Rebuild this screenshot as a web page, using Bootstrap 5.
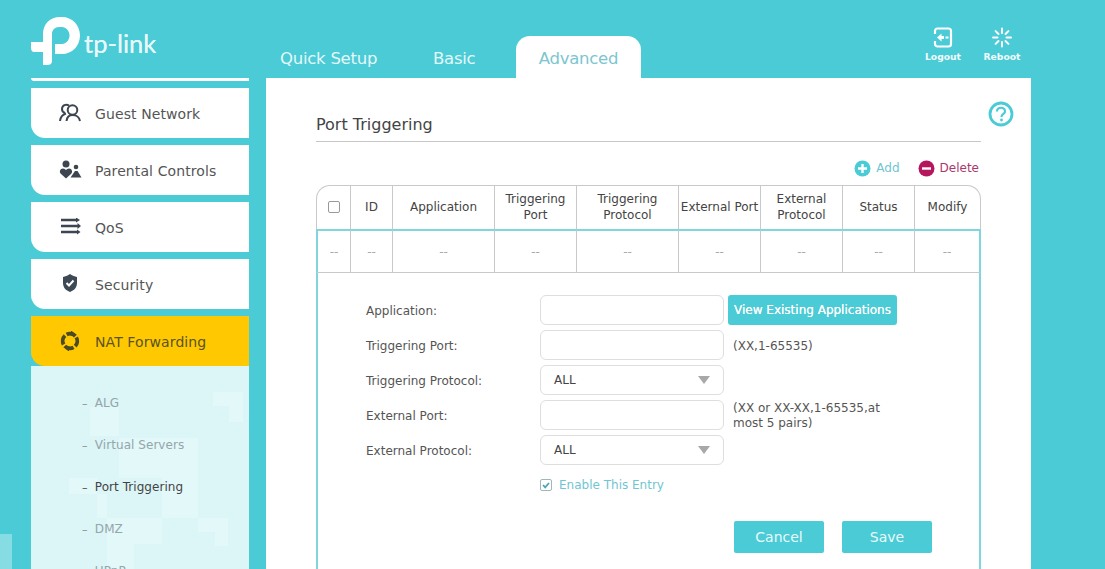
<!DOCTYPE html>
<html lang="en">
<head>
<meta charset="utf-8">
<title>Port Triggering</title>
<link href="https://cdn.jsdelivr.net/npm/bootstrap@5.3.0/dist/css/bootstrap.min.css" rel="stylesheet">
<style>
html,body{height:100%;overflow:hidden}
body{background:#4acbd6;font-family:"DejaVu Sans",Verdana,sans-serif;font-size:12px;color:#555;position:relative}
.shell{height:569px;width:1105px}
.top-bar{height:78px;padding-left:31px}
.logo-box{width:235px;position:relative;height:78px;flex:none}
.logo-mark{position:absolute;left:0;top:17px}
.logo-word{position:absolute;left:53px;top:23px;font-family:"Lato",sans-serif;font-size:25.500px;line-height:40px;color:#e6f9fa;font-weight:400;white-space:nowrap;text-shadow:0 0 .6px #e6f9fa}
.tabs-row{width:765px;height:78px;align-items:flex-end;position:relative}
.tab-item{font-size:16.500px;color:#e4f8f9;line-height:22px;height:42px;padding-top:12px;text-align:center;letter-spacing:-.25px;white-space:nowrap}
.tab-quick{margin-left:14px;width:97px}
.tab-basic{margin-left:56px;width:42px}
.tab-adv{margin-left:41px;width:125px;background:#fff;color:#7cc6d0;border-radius:14px 14px 0 0}
.tool-btn{position:absolute;top:27px;width:60px;text-align:center;color:#f2fcfc;font-size:9.200px;line-height:12px;font-weight:600}
.tool-btn svg{display:block;margin:0 auto 3px}
.tool-logout{right:58px}
.tool-reboot{right:-1px}
.side-col{width:218px;margin-left:31px;margin-right:17px;flex:none}
.side-sliver{height:3px;background:#fff;border-radius:0 0 0 8px;margin-bottom:7px}
.side-item{height:50px;background:#fff;border-radius:0 0 0 14px;margin-bottom:7px;font-size:14px;letter-spacing:.1px;color:#555;padding-left:24px;padding-top:2px}
.side-item svg{width:30px;flex:none;margin-right:10px;margin-top:-2px}
.side-item.is-on{background:#ffc800;margin-bottom:0;color:#5a5326}
.sub-panel{background:#dcf5f6;flex:1;position:relative;overflow:hidden;padding-top:16px}
.sub-decor{position:absolute;left:0;top:0}
.sub-link{position:relative;height:42px;line-height:42px;padding-left:51px;font-size:12px;color:#93a6aa;letter-spacing:.05px}
.sub-link::before{content:"–";margin-right:7.300px;color:#888;font-size:11px}
.sub-link.is-cur{color:#444}
.sub-link.is-cur::before{color:#444}
.main-panel{width:765px;background:#fff;padding:34px 50px 0;position:relative;overflow:hidden}
.help-mark{position:absolute;left:722px;top:23px}
.page-title{font-size:16px;line-height:26px;color:#444;border-bottom:1px solid #c6c6c6;height:30px;margin-bottom:17px;width:665px}
.act-row{height:18px;margin-bottom:8px;width:663px;gap:18px;justify-content:flex-end}
.act-link{gap:5px;font-size:12px;color:#6fc6d2}
.act-del{color:#a9386c}
.grid-wrap{width:665px}
.port-grid{border-collapse:separate;border-spacing:0;table-layout:fixed;width:665px;margin:0;color:#444}
.port-grid th{height:44px;font-weight:400;font-size:12px;line-height:16px;text-align:center;vertical-align:middle;border:1px solid #c9c9c9;border-left:0;border-bottom:0;padding:0 0 2px}
.port-grid th:first-child{border-left:1px solid #c9c9c9;border-top-left-radius:14px}
.port-grid th:last-child{border-top-right-radius:14px}
.port-grid td.dash-cell{height:44px;text-align:center;color:#aaa;font-size:12px;border-top:2px solid #7fd6dd;border-right:1px solid #c9c9c9;border-bottom:1px solid #c9c9c9;padding:0}
.port-grid td.dash-cell:first-child{border-left:2px solid #7fd6dd}
.port-grid td.dash-cell:last-child{border-right:2px solid #7fd6dd}
.port-grid td.form-cell{border-left:2px solid #7fd6dd;border-right:2px solid #7fd6dd;padding:22px 0 0 48px;height:320px;vertical-align:top}
.box-check{width:12px;height:12px;border:1px solid #999;border-radius:2px;display:inline-block;vertical-align:middle;background:#fff}
.form-line{height:30px;margin-bottom:5px;font-size:12px;color:#555}
.form-lab{width:174px;flex:none;padding-top:2px}
.form-box{width:184px;height:30px;flex:none;border:1px solid #dedede;border-radius:6px;background:#fff;padding:0 13px;color:#444;display:flex;align-items:center;justify-content:space-between}
.tip-side{margin-left:9px;line-height:15px;width:175px;padding-top:2px}
.btn-view{margin-left:4px;height:30px;width:169px;background:#4acbd6;color:#fff;font-size:12px;font-weight:400;border-radius:3px;border:0;padding:0;white-space:nowrap;text-shadow:0 0 .5px #fff}
.enable-line{margin:9px 0 0 174px;gap:7px;color:#6fc6d2;height:22px}
.tick-box{width:12px;height:12px;border:1px solid #9fb6ba;border-radius:2px;display:flex}
.btn-line{margin:25px 0 0 368px;gap:18px}
.btn-act{width:90px;height:32px;background:#4acbd6;color:#e9fafb;font-size:14px;border:0;border-radius:2px;padding:0}
.corner-tile{position:absolute;left:0;top:534px;width:12px;height:35px;background:#86dce3}
</style>
</head>
<body>
<div class="shell d-flex flex-column">
  <div class="top-bar d-flex">
    <div class="logo-box">
      <svg class="logo-mark" width="50" height="49" viewBox="0 0 50 49"><path fill="#fff" d="M12 25V17C12 7 19 0 29 0H31C41 0 49 8 49 18.500C49 29 41 37 31 37H24V27H31C35 27 38.500 23 38.500 18.500C38.500 14 35 10 31 10H28C24 10 21 13 21 17V44C21 47 19 48 16 48H12V35H3C1 35 0 33 0 31V25Z"/></svg>
      <span class="logo-word">tp-link</span>
    </div>
    <div class="tabs-row d-flex">
      <div class="tab-item tab-quick">Quick Setup</div>
      <div class="tab-item tab-basic">Basic</div>
      <div class="tab-item tab-adv">Advanced</div>
      <div class="tool-btn tool-logout">
        <svg width="20" height="21" viewBox="0 0 20 21"><path d="M2 7V4C2 2.500 3 1.500 4.500 1.500H15.500C17 1.500 18 2.500 18 4V17C18 18.500 17 19.500 15.500 19.500H4.500C3 19.500 2 18.500 2 17V14" fill="none" stroke="#fff" stroke-width="2.200"/><path fill="#fff" d="M4 10.500L8.500 6.500V9H11V12H8.500V14.500Z"/><rect x="12.500" y="9.500" width="3" height="2" fill="#fff"/></svg>
        Logout
      </div>
      <div class="tool-btn tool-reboot">
        <svg width="20" height="21" viewBox="0 0 20 21" stroke="#fff" stroke-width="2" stroke-linecap="round"><path d="M10 1.500V6M10 15V19.500M1 10.500H5.500M14.500 10.500H19M3.600 4.100L6.500 7M13.500 14L16.400 16.900M16.400 4.100L13.500 7M6.500 14L3.600 16.900"/></svg>
        Reboot
      </div>
    </div>
  </div>
  <div class="d-flex flex-grow-1 overflow-hidden">
    <div class="side-col d-flex flex-column">
      <div class="side-sliver"></div>
      <div class="side-item d-flex align-items-center">
        <svg height="22" viewBox="0 0 30 22" fill="none" stroke="#3d4650" stroke-width="2"><path d="M14 3.500C11 1.500 7 3.500 7 7C7 9 8.500 10.500 10 11"/><circle cx="17.500" cy="8" r="4.800"/><path d="M5 19C5.500 15 7.500 12.500 11 11.500M11.500 19C12 15 14 13 17.500 13C21.500 13 24.500 15.500 25 19"/></svg>
        Guest Network
      </div>
      <div class="side-item d-flex align-items-center">
        <svg height="20" viewBox="0 0 30 20" fill="#3d4650"><circle cx="11" cy="4" r="3.500"/><circle cx="21" cy="7" r="2.300"/><path d="M11 18.500L5.800 13.800C4 12 5 8.500 8 8.500C9.300 8.500 10.300 9.200 11 10.300C11.700 9.200 12.700 8.500 14 8.500C17 8.500 18 12 16.200 13.800Z"/><path d="M15.500 17.500L20 11H22.500L26.500 17.500Z"/></svg>
        Parental Controls
      </div>
      <div class="side-item d-flex align-items-center">
        <svg height="18" viewBox="0 0 30 18" fill="#3d4650"><path d="M6 .7H21V-.5L25 2L21 4.500V3.300H6ZM6 6.700H22.500V5L26 8L22.500 11V9.300H6ZM6 12.700H22V11.500L25.500 14L22 16.500V15.300H6Z"/></svg>
        QoS
      </div>
      <div class="side-item d-flex align-items-center">
        <svg height="20" viewBox="0 0 30 20"><path fill="#3d4a56" d="M15 0C18 2 19.500 2.500 22 3V9C22 13.500 19 16.500 15 18C11 16.500 8 13.500 8 9V3C10.500 2.500 12 2 15 0Z"/><path fill="none" stroke="#fff" stroke-width="2" d="M11.500 9L14 11.500L18.500 6.500"/></svg>
        Security
      </div>
      <div class="side-item is-on d-flex align-items-center">
        <svg height="20" viewBox="0 0 30 20" fill="none" stroke="#4a4a24" stroke-width="3.800"><circle cx="15" cy="10" r="7.300" stroke-dasharray="9.500 2" transform="rotate(-30 15 10)"/><path fill="#4a4a24" stroke="none" d="M16 -.5L20 2.500L15.500 5ZM14 20.500L10 17.500L14.500 15Z"/></svg>
        NAT Forwarding
      </div>
      <div class="sub-panel">
        <svg class="sub-decor" width="218" height="203" viewBox="0 0 218 203" fill="#e3f8f9"><path d="M182 26H212V56H198V40H182Z"/><path d="M59 41H88V70H59Z"/><path d="M88 72H167V152H131V112H88Z"/><path d="M38 112H66V152H76V128H38Z"/><path d="M76 152H131V178H76ZM167 152H197V180H184V166H167Z"/><path d="M76 178H103V203H76Z"/></svg>
        <div class="sub-link">ALG</div>
        <div class="sub-link">Virtual Servers</div>
        <div class="sub-link is-cur">Port Triggering</div>
        <div class="sub-link">DMZ</div>
        <div class="sub-link">UPnP</div>
      </div>
    </div>
    <div class="main-panel">
      <svg class="help-mark" width="26" height="26" viewBox="0 0 26 26"><circle cx="13" cy="13" r="11" fill="none" stroke="#4acbd6" stroke-width="2.800"/><path d="M9 10.500C9 5.500 17 5.500 17 10.500C17 13 13.500 13 13.500 16" fill="none" stroke="#4acbd6" stroke-width="2.200"/><circle cx="13.500" cy="19" r="1.400" fill="#4acbd6"/></svg>
      <div class="page-title">Port Triggering</div>
      <div class="act-row d-flex">
        <div class="act-link d-flex align-items-center"><svg width="17" height="17" viewBox="0 0 17 17"><circle cx="8.500" cy="8.500" r="8" fill="#4acbd6"/><path d="M4 8.500H13M8.500 4V13" stroke="#fff" stroke-width="2.400"/></svg>Add</div>
        <div class="act-link act-del d-flex align-items-center"><svg width="17" height="17" viewBox="0 0 17 17"><circle cx="8.500" cy="8.500" r="8" fill="#b5175f"/><path d="M4 8.500H13" stroke="#fff" stroke-width="2.400"/></svg>Delete</div>
      </div>
      <div class="grid-wrap">
        <table class="port-grid">
          <colgroup><col style="width:35px"><col style="width:42px"><col style="width:102px"><col style="width:82px"><col style="width:102px"><col style="width:82px"><col style="width:82px"><col style="width:72px"><col style="width:66px"></colgroup>
          <thead><tr><th><span class="box-check"></span></th><th>ID</th><th>Application</th><th>Triggering<br>Port</th><th>Triggering<br>Protocol</th><th>External Port</th><th>External<br>Protocol</th><th>Status</th><th>Modify</th></tr></thead>
          <tbody>
            <tr><td class="dash-cell">--</td><td class="dash-cell">--</td><td class="dash-cell">--</td><td class="dash-cell">--</td><td class="dash-cell">--</td><td class="dash-cell">--</td><td class="dash-cell">--</td><td class="dash-cell">--</td><td class="dash-cell">--</td></tr>
            <tr><td class="form-cell" colspan="9">
              <div class="form-line d-flex align-items-center"><span class="form-lab">Application:</span><span class="form-box"></span><button type="button" class="btn btn-view">View Existing Applications</button></div>
              <div class="form-line d-flex align-items-center"><span class="form-lab">Triggering Port:</span><span class="form-box"></span><span class="tip-side">(XX,1-65535)</span></div>
              <div class="form-line d-flex align-items-center"><span class="form-lab">Triggering Protocol:</span><span class="form-box">ALL<svg width="12" height="8" viewBox="0 0 12 8"><path fill="#a8a8a8" d="M0 0H12L6 8Z"/></svg></span></div>
              <div class="form-line d-flex align-items-center"><span class="form-lab">External Port:</span><span class="form-box"></span><span class="tip-side">(XX or XX-XX,1-65535,at most 5 pairs)</span></div>
              <div class="form-line d-flex align-items-center"><span class="form-lab">External Protocol:</span><span class="form-box">ALL<svg width="12" height="8" viewBox="0 0 12 8"><path fill="#a8a8a8" d="M0 0H12L6 8Z"/></svg></span></div>
              <div class="enable-line d-flex align-items-center"><span class="tick-box"><svg width="10" height="10" viewBox="0 0 10 10"><path d="M2 5L4.200 7.300L8 3" fill="none" stroke="#4aa6b2" stroke-width="1.800"/></svg></span>Enable This Entry</div>
              <div class="btn-line d-flex"><button type="button" class="btn btn-act">Cancel</button><button type="button" class="btn btn-act">Save</button></div>
            </td></tr>
          </tbody>
        </table>
      </div>
    </div>
  </div>
</div>
<div class="corner-tile"></div>
</body>
</html>
